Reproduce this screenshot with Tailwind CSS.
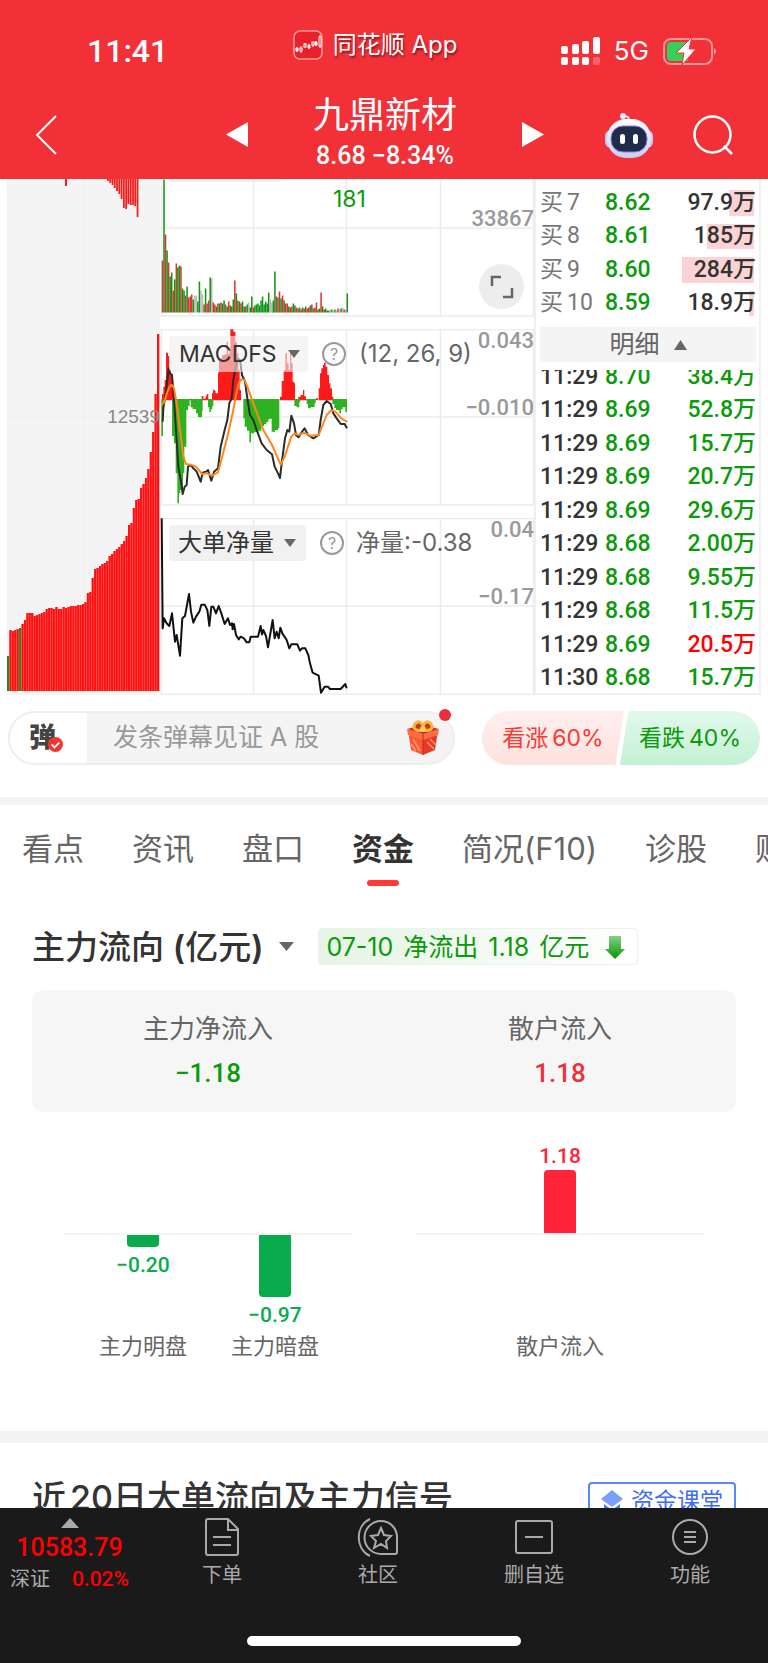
<!DOCTYPE html>
<html lang="zh-CN">
<head>
<meta charset="utf-8">
<meta name="viewport" content="width=device-width, initial-scale=1">
<title>九鼎新材</title>
<script src="https://cdn.jsdelivr.net/npm/@tailwindcss/browser@4"></script>
</head>
<body class="bg-white text-[#333] font-['Inter','Noto_Sans_CJK_SC',sans-serif] overflow-x-hidden">

<header class="bg-[#f23038] text-white h-[179px] flex flex-col">
  <div class="grid grid-cols-[1fr_auto_1fr] items-center h-[90px] pr-[18px] pt-3">
    <div class="pl-[87px] text-[32px] leading-10 font-medium font-['Roboto']">11:41</div>
    <div class="flex items-center gap-[10px] pb-3">
      <svg class="size-[30px]" viewBox="0 0 30 30" fill="none">
        <rect x="1" y="1" width="28" height="28" rx="6" fill="#e8222b" stroke="#ff9a9c" stroke-width="1.5"/>
        <path d="M4 17v5M8 16v7M12 13v5M16 14v5M20 12v5M23 11v5M27 5v13" stroke="#fff" stroke-width="1"/>
        <path d="M3 18h2v3H3zM15 15h2v3h-2zM22 12h2v3h-2z" fill="#fff" stroke="#fff"/>
        <rect x="7" y="18" width="2" height="3" fill="#e8222b" stroke="#fff"/><rect x="11" y="14" width="2" height="3" fill="#e8222b" stroke="#fff"/><rect x="19" y="12" width="2" height="3" fill="#e8222b" stroke="#fff"/><rect x="26" y="7" width="2" height="9" fill="#e8222b" stroke="#fff"/>
      </svg>
      <span class="text-2xl [text-shadow:1px_2px_2px_#0007]">同花顺 App</span>
    </div>
    <div class="flex items-center justify-end gap-[14px] pr-[33px]">
      <svg class="w-[39px] h-7" viewBox="0 0 39 28" fill="#fff">
        <rect x="0" y="9" width="7" height="8" rx="2"/><rect x="11" y="7" width="7" height="10" rx="2"/><rect x="21" y="4" width="7" height="13" rx="2"/><rect x="32" y="0" width="7" height="17" rx="2"/>
        <rect x="0" y="20" width="7" height="8" rx="2"/><rect x="11" y="20" width="7" height="8" rx="2"/><rect x="21" y="20" width="7" height="8" rx="2"/><rect x="32" y="20" width="7" height="8" rx="2" opacity=".25"/>
      </svg>
      <span class="text-[26px] leading-8">5G</span>
      <svg class="w-[54px] h-[30px]" viewBox="0 0 54 30">
        <rect x="1" y="3" width="48" height="25" rx="7" fill="none" stroke="#fff" stroke-opacity=".5" stroke-width="2"/>
        <path d="M51 12q4 3 0 7z" fill="#fff" opacity=".5"/>
        <path d="M8 6h17v19H8q-4 0-4-4V10q0-4 4-4z" fill="#35d058"/>
        <path d="M29 1 13 17h8l-2 12 14-16h-7z" fill="#fff" stroke="#f23038" stroke-width="1"/>
      </svg>
    </div>
  </div>
  <nav class="grid grid-cols-[1fr_320px_1fr] items-center h-[89px]">
    <div class="pl-[35px]">
      <button aria-label="返回" class="block"><svg class="w-[23px] h-10" viewBox="0 0 23 40" fill="none" stroke="#fff" stroke-width="2"><path d="M21 1 2 20l19 19"/></svg></button>
    </div>
    <div class="flex items-center justify-between">
      <button aria-label="上一只" class="pl-[2px]"><svg class="w-[22px] h-[25px]" viewBox="0 0 22 25" fill="#fff"><path d="M22 0v25L0 12.5z"/></svg></button>
      <div class="flex flex-col items-center">
        <h1 class="text-[36px] leading-[42px]">九鼎新材</h1>
        <p class="text-[25px] leading-10 font-medium font-['Roboto']">8.68 −8.34%</p>
      </div>
      <button aria-label="下一只"><svg class="w-[22px] h-[25px]" viewBox="0 0 22 25" fill="#fff"><path d="M0 0v25l22-12.5z"/></svg></button>
    </div>
    <div class="flex items-center justify-end gap-10 pr-[35px]">
      <button aria-label="智能助手"><svg class="w-12 h-[46px]" viewBox="0 0 48 46">
        <defs><linearGradient id="rb" x1="0" y1="0" x2="0" y2="1"><stop stop-color="#fff"/><stop offset="1" stop-color="#c9cef0"/></linearGradient></defs>
        <path d="M24 10q1-6-5-6" fill="none" stroke="#dfe3fb" stroke-width="2"/><circle cx="18" cy="4" r="3" fill="#e8ebff"/>
        <rect x="0" y="18" width="48" height="18" rx="6" fill="#c3c9f2"/>
        <rect x="2" y="7" width="44" height="39" rx="19" fill="url(#rb)"/>
        <rect x="6" y="14" width="36" height="26" rx="12" fill="#202b4a" stroke="#8f7cf0" stroke-width="1"/>
        <rect x="15" y="22" width="5" height="10" rx="2.5" fill="#fff"/><rect x="28" y="22" width="5" height="10" rx="2.5" fill="#fff"/>
      </svg></button>
      <button aria-label="搜索"><svg class="size-10" viewBox="0 0 40 40" fill="none" stroke="#fff" stroke-width="2.500"><circle cx="19.500" cy="19.500" r="18"/><path d="m31 31 8 8"/></svg></button>
    </div>
  </nav>
</header>

<main>
<section class="flex h-[516px] px-[7px]">
  <div class="relative w-[153px] shrink-0 bg-[#f4f4f4]">
    <svg id="depth" class="block size-full" viewBox="7 179 153 516" preserveAspectRatio="none">
      <path d="M84.500 179v516M7 417.500h153" stroke="#ebebeb" stroke-dasharray="2 2"/>
    </svg>
    <span class="absolute right-0 top-[226px] text-[19px] leading-6 text-[#888] font-['Liberation_Sans']">12539</span>
  </div>

  <div class="flex-1 flex flex-col gap-3">
    <div class="relative h-[138px]">
      <svg id="volume" class="absolute inset-0 size-full" viewBox="160 179 374 138" preserveAspectRatio="none">
        <path d="M161.500 179v138M253.500 179v138M346.500 179v138M440.500 179v138M533.500 179v138M160 228h374M160 316h374" fill="none" stroke="#ececec" stroke-width="1.500"/>
        <path d="M169 179h112q0 3-4 3H173q-4 0-4-3z" fill="#f1f1f1"/>
      </svg>
      <span class="absolute left-[173px] top-[6px] text-[23px] leading-7 text-[#0b9a0b]">181</span>
      <span class="absolute right-0 top-[26px] text-[22px] leading-7 text-[#999] font-medium font-['Roboto']">33867</span>
      <button aria-label="全屏" class="absolute right-[10px] bottom-[8px] size-[45px] rounded-full bg-[#ededed] flex items-center justify-center">
        <svg class="size-6" viewBox="0 0 24 24" fill="none" stroke="#666" stroke-width="2.500"><path d="M2 11V2h9M22 13v9h-9"/></svg>
      </button>
    </div>

    <div class="relative h-[177px]">
      <svg class="absolute inset-0 size-full" viewBox="160 329 374 177" preserveAspectRatio="none">
        <path d="M161.500 329v177M253.500 329v177M346.500 329v177M440.500 329v177M533.500 329v177M160 329.500h374M160 417h374M160 505h374" fill="none" stroke="#ececec" stroke-width="1.500"/>
        <g transform="translate(150 320) scale(.33333)">
          <path fill="#ff1a1a" d="M36 241V222h4V200h4V180h4V98h6V108h4V148h5V170h4V205h3V241zM118 241v-5h6v5zM155 241v-13h5v8h7v-7h3v-7h5v16h5v3zM186 241V220h3V209h5V213h3V220h7V158h3V122h5V115h4V106h6V104h5V102h3V65h4V103h4V88h3V28h9V35h6V66h5V100h4V150h4V210h4V241zM390 241V230h5V183h6V150h5V100h5V130h5V150h4V95h4V130h4V185h5V190h2V241zM445 241V230h7V225h7V210h4V229h5V238h8V241zM497 241v-6h7v6zM506 241V205h4V160h4V145h5V135h3V128h5V140h5V165h5V190h4V205h5V230h4V241z"/>
          <path fill="#2fb222" d="M34 237h5v111h-5zM66 237V348h6V370h5V460h5V550h5V520h4V510h8V460h4V380h6V270h5V258h5V237zM122 237V262h6V267h10V280h6V292h12V273h2V237zM174 237v25h4v14h5v-8h4v-10h3V237zM280 237V295h4V320h7V332h7V367h5V340h10V336h9V342h4V332h8V318h8V312h7V306h6V298h4V296h6V335h10V330h9V325h4V237zM433 237v21h7v4h8v-17h3v-8zM470 237v15h4v13h8v-4h12v-12h3V237zM547 237v15h6v12h5v6h10v10h5v-12h5v-6h8v14h5V237z"/>
          <path fill="none" stroke="#2b2b2b" stroke-width="6" stroke-linejoin="round" d="M38 305 40 265 48 215 56 145 60 160 66 165 72 240 80 360 85 440 94 490 98 522 104 500 110 495 114 440 122 435 130 445 140 455 152 485 158 458 168 455 174 450 184 482 192 455 204 445 212 380 224 330 232 300 238 250 245 235 250 180 262 115 270 120 276 165 285 185 292 235 300 285 310 300 320 330 335 370 350 390 366 403 374 440 384 460 390 474 395 430 405 355 412 330 418 335 424 287 432 310 438 345 446 352 456 335 464 325 474 345 490 355 506 345 512 300 520 255 530 243 542 252 550 280 560 295 572 312 584 312 591 325"/>
          <path fill="none" stroke="#ff861c" stroke-width="6" stroke-linejoin="round" d="M35 255 42 248 52 215 60 198 66 195 72 205 80 250 90 330 100 410 108 432 122 434 138 440 156 462 172 460 186 467 204 457 214 420 232 350 248 280 258 225 266 190 274 178 284 180 292 200 310 250 340 330 366 375 392 434 404 410 424 350 434 340 446 345 462 338 480 347 506 345 516 320 530 285 544 270 556 275 574 295 592 306"/>
        </g>
      </svg>
      <div class="relative flex items-start pl-[9px] pt-[7px]">
        <button class="flex items-center justify-between w-[139px] h-[36px] rounded px-2 pl-[10px] bg-[#eeeeee]/60 text-[23px] leading-8">MACDFS<svg class="w-3 h-2" viewBox="0 0 12 8" fill="#666"><path d="M0 0h12L6 8z"/></svg></button>
        <button aria-label="MACD说明" class="ml-[14px] mt-[6px] size-6 rounded-full border-2 border-[#999] text-[#999] text-base leading-5">?</button>
        <span class="ml-[13px] text-2xl leading-9 text-[#666]">(12, 26, 9)</span>
      </div>
      <span class="absolute right-0 -top-[2px] text-[22px] leading-7 text-[#999] font-medium font-['Roboto']">0.043</span>
      <span class="absolute right-0 top-[65px] text-[22px] leading-7 text-[#999] font-medium font-['Roboto']">−0.010</span>
    </div>

    <div class="relative h-[177px]">
      <svg class="absolute inset-0 size-full" viewBox="160 518 374 177" preserveAspectRatio="none">
        <path d="M161.500 518v177M253.500 518v177M346.500 518v177M440.500 518v177M533.500 518v177M160 518.500h374M160 606h374M160 694.500h374" fill="none" stroke="#ececec" stroke-width="1.500"/>
        <path transform="translate(0 430) scale(.33333)" fill="none" stroke="#111" stroke-width="6" stroke-linejoin="round" d="M485 265 488 595 492 565 500 580 508 588 516 550 525 635 530 615 540 677 547 565 555 558 567 492 573 545 580 578 588 560 598 545 604 524 614 524 622 540 628 588 634 530 640 530 648 550 656 528 664 550 674 582 684 565 690 585 696 580 698 598 702 582 708 615 716 628 722 620 732 625 740 637 748 637 752 620 774 620 782 588 786 613 790 600 798 618 804 652 818 570 824 625 830 605 836 625 841 593 847 610 860 630 868 655 874 643 892 643 900 662 906 655 916 655 925 675 930 700 938 728 956 737 963 788 974 770 984 770 990 777 1022 777 1036 762 1040 775"/>
      </svg>
      <div class="relative flex items-start pl-[9px] pt-[7px]">
        <button class="flex items-center justify-between w-[137px] h-[36px] rounded px-[10px] pl-[9px] bg-[#eeeeee]/80 text-2xl leading-8">大单净量<svg class="w-3 h-2" viewBox="0 0 12 8" fill="#666"><path d="M0 0h12L6 8z"/></svg></button>
        <button aria-label="大单净量说明" class="ml-[14px] mt-[6px] size-6 rounded-full border-2 border-[#999] text-[#999] text-base leading-5">?</button>
        <span class="ml-[12px] text-2xl leading-9 text-[#666]">净量:-0.38</span>
      </div>
      <span class="absolute right-0 -top-[2px] text-[22px] leading-7 text-[#999] font-medium font-['Roboto']">0.04</span>
      <span class="absolute right-0 top-[65px] text-[22px] leading-7 text-[#999] font-medium font-['Roboto']">−0.17</span>
    </div>
  </div>

  <div class="w-[227px] shrink-0 border-x-2 border-b-2 border-[#f0f0f0] pl-1 pr-[3px] pt-[7px] flex flex-col font-['Roboto','Noto_Sans_CJK_SC',sans-serif] text-[23px] leading-7 font-medium">
    <table class="w-full h-[134px] table-fixed">
      <tbody id="bids"></tbody>
    </table>
    <button class="mt-[7px] h-[35px] shrink-0 bg-[#f4f4f4] text-[#666] text-[25px] font-normal flex items-center justify-center gap-[14px]">明细<svg class="w-[13px] h-[10px]" viewBox="0 0 13 10" fill="#666"><path d="M6.500 0 13 10H0z"/></svg></button>
    <div class="mt-2 flex-1 min-h-0 overflow-hidden flex flex-col justify-end">
      <table class="w-full h-[335px] shrink-0 table-fixed">
        <tbody id="ticks"></tbody>
      </table>
    </div>
  </div>
</section>

<section class="flex items-center px-2 pt-4 pb-8 h-[102px]">
  <div class="relative w-[447px] h-[54px]">
    <div class="flex h-full rounded-full overflow-hidden border-2 border-[#eee] bg-[#f4f4f4]">
      <button aria-label="弹幕开关" class="w-[77px] bg-white flex items-center pl-[19px]">
        <span class="relative text-[27px] leading-8 font-black text-[#444]">弹
          <svg class="absolute left-[19px] top-[15px] size-[15px]" viewBox="0 0 16 16"><circle cx="8" cy="8" r="8" fill="#f4352f"/><path d="m4 8 3 3 5-5" fill="none" stroke="#fff" stroke-width="2"/></svg>
        </span>
      </button>
      <input aria-label="弹幕" placeholder="发条弹幕见证 A 股" class="flex-1 min-w-0 pl-[26px] text-[25px] bg-transparent outline-none placeholder:text-[#999]">
      <button aria-label="礼物" class="w-[46px] shrink-0 flex items-center">
        <svg class="w-8 h-[36px]" viewBox="0 0 32 36">
          <path d="M1 10h15v25L4 30z" fill="#f8573a"/><path d="M31 10H16v25l12-5z" fill="#e43a26"/>
          <path d="m0 9 16-4 16 4-16 5z" fill="#c92f20"/><path d="m0 9 16 5v6L1 15zM32 9l-16 5v6l15-5z" fill="#ff6c45"/>
          <path d="m6 19 7 12M4 24l5 7M20 22l7 7M23 19l6 6" stroke="#ff9562" stroke-width="1.500"/><path d="M16 14v21" stroke="#c22b1b"/>
          <path d="M16 10C9 12 5 8 8 4s9-2 8 6zM16 10c7 2 11-2 8-6s-9-2-8 6z" fill="#c3381a" stroke="#ffb53c" stroke-width="3"/><circle cx="16" cy="9" r="3" fill="#ffd05a"/>
        </svg>
      </button>
    </div>
    <span class="absolute right-[4px] -top-[2px] size-3 rounded-full bg-[#ea3038]"></span>
  </div>
  <div class="flex-1 flex justify-end text-[23px]">
    <button class="w-[142px] h-[54px] rounded-l-full rounded-r-sm bg-linear-to-b from-[#ffefee] to-[#fde2df] text-[#fb3a35] [clip-path:polygon(0_0,100%_0,94%_100%,0_100%)]">看涨<span class="ml-1">60%</span></button>
    <button class="-ml-1 w-[140px] h-[54px] rounded-r-full rounded-l-sm bg-linear-to-b from-[#e2f9ec] to-[#c3f0d5] text-[#0b9a0b] [clip-path:polygon(6%_0,100%_0,100%_100%,0_100%)]">看跌<span class="ml-1">40%</span></button>
  </div>
</section>

<div class="h-2 bg-[#f4f4f4]"></div>

<nav class="flex items-start gap-12 pl-[22px] pt-6 h-[98px] overflow-hidden whitespace-nowrap text-[31px] leading-10 text-[#666]">
  <a href="#kd">看点</a><a href="#zx">资讯</a><a href="#pk">盘口</a>
  <a href="#zj" class="flex flex-col items-center gap-[11px] font-bold text-[#333]">资金<span class="w-8 h-[6px] rounded-sm bg-[#ff3933]"></span></a>
  <a href="#jk">简况(F10)</a><a href="#zg">诊股</a><a href="#cw">财务</a>
</nav>

<section id="zj" class="px-8 pt-6">
  <div class="flex items-center gap-6 h-[39px]">
    <button class="flex items-center gap-4 text-[33px] leading-10 font-medium"><span>主力流向 <span class="font-semibold">(</span>亿元<span class="font-semibold">)</span></span><svg class="w-[15px] h-[9px]" viewBox="0 0 15 9" fill="#666"><path d="M0 0h15L7.500 9z"/></svg></button>
    <div class="flex items-center gap-4 h-[37px] px-[7px] pr-3 border border-[#e8f5e8] rounded-sm bg-linear-to-r from-[#e5f4e5] to-white text-[#0b9a0b] text-[25px] leading-8"><span class="flex gap-[10px]"><span>07-10</span><span>净流出</span><span>1.18</span><span>亿元</span></span>
      <svg class="w-5 h-6" viewBox="0 0 20 24"><defs><linearGradient id="ar" x1="0" y1="0" x2="0" y2="1"><stop stop-color="#86cf86"/><stop offset="1" stop-color="#069806"/></linearGradient></defs><path d="M4 1h12v13h4L10 24 0 14h4z" fill="url(#ar)"/></svg>
    </div>
  </div>
  <dl class="mt-6 grid grid-cols-2 h-[122px] rounded-xl bg-[#f6f6f6] text-center pt-[19px]">
    <div><dt class="text-[26px] leading-10 text-[#666]">主力净流入</dt><dd class="mt-1 text-[26px] leading-10 font-medium font-['Roboto'] text-[#0b9a0b]">−1.18</dd></div>
    <div><dt class="text-[26px] leading-10 text-[#666]">散户流入</dt><dd class="mt-1 text-[26px] leading-10 font-medium font-['Roboto'] text-[#f03038]">1.18</dd></div>
  </dl>
  <div class="grid grid-cols-2 gap-[62px] px-[31px] pt-[28px] h-[319px] text-[21px] leading-7">
    <div class="flex flex-col">
      <div class="h-[93px]"></div>
      <div class="h-[2px] bg-[#f4f4f4]"></div>
      <div class="flex-1 grid grid-cols-[132px_132px] justify-center pl-[2px]">
        <div class="flex flex-col items-center"><div class="w-8 h-3 rounded-b bg-[#0aab4d]"></div><span class="mt-1 text-[#0aab4d] font-medium font-['Roboto']">−0.20</span><span class="mt-auto mb-[71px] text-[22px] text-[#666]">主力明盘</span></div>
        <div class="flex flex-col items-center"><div class="w-8 h-[62px] rounded-b bg-[#0aab4d]"></div><span class="mt-1 text-[#0aab4d] font-medium font-['Roboto']">−0.97</span><span class="mt-auto mb-[71px] text-[22px] text-[#666]">主力暗盘</span></div>
      </div>
    </div>
    <div class="flex flex-col items-center"><div class="h-[93px] flex flex-col items-center justify-end"><span class="text-[#ff2438] font-medium font-['Roboto']">1.18</span><div class="w-8 h-[63px] rounded-t bg-[#ff2438]"></div></div><div class="w-full h-[2px] bg-[#f4f4f4]"></div><span class="mt-auto mb-[71px] text-[22px] text-[#666]">散户流入</span></div>
  </div>
</section>

<div class="h-3 bg-[#f4f4f4]"></div>

<section class="h-[65px] overflow-hidden px-8 pt-[39px] flex items-start justify-between">
  <h2 class="text-[34px] leading-10 font-medium -mt-1">近<span class="ml-1">20</span>日大单流向及主力信号</h2>
  <a href="#class" class="shrink-0 flex items-center gap-2 w-[148px] h-[38px] px-[11px] border-2 border-[#5a86ff] rounded text-[23px] leading-8 text-[#3e6cf5]">
    <svg class="w-[22px] h-6 shrink-0" viewBox="0 0 22 24"><path d="m11 1 11 9-11 8L0 10z" fill="#7aa0fb"/><path d="M3 15v7h16v-7l-8 6z" fill="#4d7cf7"/></svg><span>资金课堂</span></a>
</section>
</main>

<footer class="relative h-[155px] bg-[#1a1a1a] text-[#aaa] text-[20px] leading-7">
  <nav class="flex">
    <a href="#sz" class="w-36 shrink-0 flex flex-col items-center pt-[10px] pr-[5px] font-['Roboto','Noto_Sans_CJK_SC',sans-serif]">
      <svg class="w-[18px] h-[10px]" viewBox="0 0 18 10" fill="#aaa"><path d="M9 0l9 10H0z"/></svg>
      <span class="mt-[4px] text-[25px] leading-8 text-[#ff0000] font-medium">10583.79</span>
      <span class="flex items-center justify-between w-[119px] leading-[30px]">深证<b class="text-[21px] font-medium text-[#ff0000]">0.02%</b></span>
    </a>
    <a href="#xd" class="flex-1 flex flex-col items-center gap-1 pt-[9px]"><svg class="w-[36px] h-10" viewBox="0 0 36 40" fill="none" stroke="#aaa" stroke-width="2"><path d="M2 4q0-2 2-2h20l10 10v24q0 2-2 2H4q-2 0-2-2zM24 2v11h10M9 20h18M9 28h18"/></svg>下单</a>
    <a href="#sq" class="flex-1 flex flex-col items-center gap-1 pt-[9px]"><svg class="w-[42px] h-10" viewBox="0 0 42 40" fill="none" stroke="#aaa" stroke-width="2"><path d="M24 4a16 16 0 1 0 0 33h14q2 0 2-2V20A16 16 0 0 0 24 4zM13 2C-2 9-2 32 13 39M24 11l3 7 7 1-5 5 1 7-6-4-7 4 2-7-5-5 7-1z"/></svg>社区</a>
    <a href="#zx2" class="flex-1 flex flex-col items-center gap-1 pt-[9px]"><svg class="w-[38px] h-10" viewBox="0 0 38 40" fill="none" stroke="#aaa" stroke-width="2"><rect x="1" y="4" width="36" height="32" rx="2"/><path d="M10 20h18"/></svg>删自选</a>
    <a href="#gn" class="flex-1 flex flex-col items-center gap-1 pt-[9px]"><svg class="w-[36px] h-10" viewBox="0 0 36 40" fill="none" stroke="#aaa" stroke-width="2"><circle cx="18" cy="20" r="17"/><path d="M12 15h12M12 20h12M12 25h12"/></svg>功能</a>
  </nav>
  <div class="absolute bottom-[17px] left-1/2 -translate-x-1/2 w-[274px] h-[10px] rounded-full bg-white"></div>
</footer>

<script>
const NS = 'http://www.w3.org/2000/svg';
function bar(svg, x, y, w, h, fill) {
  const r = document.createElementNS(NS, 'rect');
  Object.entries({x, y, width: w, height: h, fill}).forEach(([k, v]) => r.setAttribute(k, v));
  svg.appendChild(r);
}
const depth = document.getElementById('depth');
const tops = [656,630,631,630,629,628,624,620,613,613,613,616,615,614,613,612,609,608,608,609,607,609,609,607,608,607,606,606,606,605,605,604,602,593,592,578,569,568,566,564,563,561,556,554,551,549,547,544,541,536,525,523,508,500,499,488,484,478,469,452,432,394,334];
tops.forEach((y, i) => {
  const x = 7 + i * 2.42;
  bar(depth, x, y, 2.42, 691 - y, '#ff6060');
  bar(depth, x, y, 1.9, 691 - y, i === 0 || i === 5 ? '#0b9a0b' : '#ff0f0f');
});
bar(depth, 65, 179, 2, 7, '#ff1a1a');
[181,183,185,188,191,194,199,208,209,204,205,205,206,217].forEach((y, i) => bar(depth, 107 + i * 2.28, 179, 1.8, y - 179, '#ff1a1a'));

const volume = document.getElementById('volume');
const vol = 'r52 g133 r78 g62 r50 g36 g40 r22 g33 r49 g45 g47 r46 g24 g22 r17 g26 r15 r16 r18 g13 k17 k17 g11 g31 k22 k18 r8 g24 r9 r12 g35 k34 r10 r8 g6 r9 g9 r10 g9 g12 r8 g6 r11 g7 r6 g13 r32 g19 r12 g11 r9 g11 g6 r6 g8 k10 g5 g16 r5 g7 g8 g9 g7 g12 g16 g8 g11 g9 g20 k13 k10 g12 g41 r16 g15 r21 g14 r17 g12 r9 r9 g6 r5 r6 g9 g7 r5 r4 g5 r3 g5 r4 g6 r4 r5 g7 r8 g4 r5 r10 g3 g4 r20 g6 r3 g4 g2 g2 k3 g3 k2 g3 k2 r4 k3 g4 k5 r3 k3 g19'.split(' ');
const hue = {r: '#d93636', g: '#149414', k: '#b9b9b9'};
vol.forEach((v, i) => { const h = +v.slice(1); bar(volume, 161.7 + i * 1.54, 312.5 - h, 1.54, h, hue[v[0]]); });

document.getElementById('bids').innerHTML = [['7','8.62','97.9',25],['8','8.61','185',47],['9','8.60','284',72],['10','8.59','18.9',5]].map(([n, p, v, w]) =>
  `<tr><th scope="row" class="w-[65px] p-0 text-left font-normal text-[#777]">买<span class="ml-1">${n}</span></th><td class="p-0 text-[#0b9a0b]">${p}</td><td class="relative p-0 text-right"><span class="absolute right-[2px] top-1 bottom-1 bg-[#fbd3d5]" style="width:${w}px"></span><span class="relative">${v}万</span></td></tr>`).join('');
document.getElementById('ticks').innerHTML = [['11:29','8.70','38.4'],['11:29','8.69','52.8'],['11:29','8.69','15.7'],['11:29','8.69','20.7'],['11:29','8.69','29.6'],['11:29','8.68','2.00'],['11:29','8.68','9.55'],['11:29','8.68','11.5'],['11:29','8.69','20.5'],['11:30','8.68','15.7']].map(([t, p, v]) =>
  `<tr><td class="w-[65px] p-0 pt-1">${t}</td><td class="p-0 pt-1 text-[#0b9a0b]">${p}</td><td class="p-0 pt-1 text-right ${v === '20.5' ? 'text-[#ff0000]' : 'text-[#0b9a0b]'}">${v}万</td></tr>`).join('');
</script>
</body>
</html>
